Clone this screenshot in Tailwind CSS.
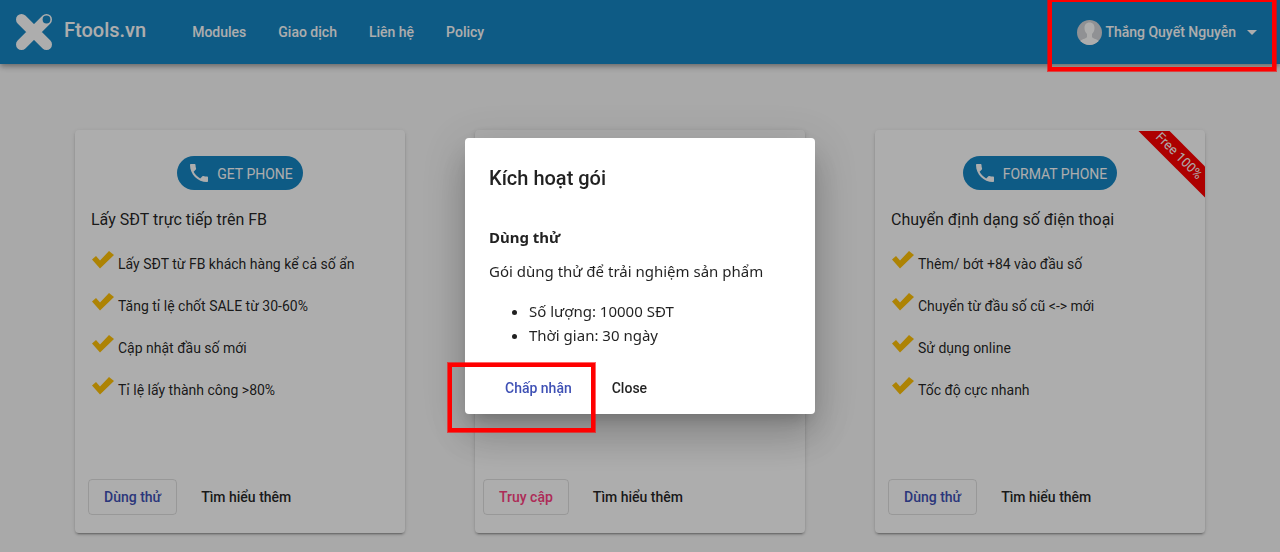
<!DOCTYPE html>
<html lang="vi">
<head>
    <meta charset="UTF-8">
    <meta name="viewport" content="width=device-width, initial-scale=1.0">
    <title>Ftools.vn</title>
    <script src="https://cdn.jsdelivr.net/npm/@tailwindcss/browser@4"></script>
</head>
<body class="min-h-screen overflow-hidden bg-[#fafafa] font-[Roboto,sans-serif] text-sm text-black/87">
    <!-- Shared icons -->
    <svg class="hidden">
        <symbol id="icon-check" viewBox="0 0 22 18">
            <path fill="#ffc107" d="M0 8.500 4 5l4 4.500L17 0l5 4L8 17.500z" />
        </symbol>
        <symbol id="icon-phone" viewBox="0 0 24 24">
            <path fill="currentColor" d="M6.62 10.79c1.44 2.83 3.76 5.14 6.59 6.59l2.2-2.2c.27-.27.67-.36 1.02-.24 1.12.37 2.33.57 3.57.57.55 0 1 .45 1 1V20c0 .55-.45 1-1 1-9.39 0-17-7.61-17-17 0-.55.45-1 1-1h3.500c.55 0 1 .45 1 1 0 1.250.2 2.450.57 3.570.11.35.03.74-.25 1.020l-2.200 2.200z" />
        </symbol>
    </svg>

    <header class="relative flex h-16 items-center bg-[#1687c5] px-4 text-white shadow-[0_2px_4px_-1px_rgba(0,0,0,0.2),0_4px_5px_0_rgba(0,0,0,0.14),0_1px_10px_0_rgba(0,0,0,0.12)]">
        <a href="#" class="flex items-center gap-3 text-xl font-medium">
            <svg class="h-9 w-9" viewBox="0 0 36 36">
                <path fill="none" stroke="#fff" stroke-width="11" stroke-linecap="round" d="M5.500 5.500l25 25M5.500 30.500l25-25" />
                <circle cx="30.500" cy="5.500" r="3.900" fill="#1687c5" />
            </svg>
            <span class="pb-1">Ftools.vn</span>
        </a>
        <nav class="ml-[46px] flex gap-8 font-medium">
            <a href="#">Modules</a>
            <a href="#">Giao dịch</a>
            <a href="#">Liên hệ</a>
            <a href="#">Policy</a>
        </nav>
        <button class="ml-auto flex items-center font-medium">
            <svg class="mr-[3px] h-[25px] w-[25px]" viewBox="0 0 25 25">
                <clipPath id="avatar"><circle cx="12.500" cy="12.500" r="12.500" /></clipPath>
                <g clip-path="url(#avatar)">
                    <path fill="#d4d6da" d="M0 0h25v25H0z" />
                    <path fill="#fff" d="M12.500 2.500c-3.500 0-5 2.400-5 5.500 0 2.700 1 4.600 2.500 6v3c-1.500 2-5.500 2-7 4.500V25h19v-3.500c-1.500-2.500-5.500-2.500-7-4.500v-3c1.500-1.400 2.500-3.300 2.500-6 0-3.100-1.500-5.500-5-5.500z" />
                </g>
            </svg>
            Thắng Quyết Nguyễn
            <svg class="ml-1 h-6 w-6" viewBox="0 0 24 24" fill="currentColor"><path d="M7 10l5 5 5-5z" /></svg>
        </button>
    </header>

    <main class="grid grid-cols-3 px-10 pt-[66px]">
        <section class="mx-[35px] flex min-h-[403px] flex-col rounded bg-white px-4 pt-[26px] pb-[18px] shadow-[0_3px_1px_-2px_rgba(0,0,0,0.2),0_2px_2px_0_rgba(0,0,0,0.14),0_1px_5px_0_rgba(0,0,0,0.12)]">
            <div class="flex h-[34px] items-center gap-1.5 self-center rounded-full bg-[#1687c5] px-2.5 text-white">
                <svg class="h-6 w-6"><use href="#icon-phone" /></svg>
                <span class="pt-0.5">GET PHONE</span>
            </div>
            <h2 class="mt-[18px] text-base">Lấy SĐT trực tiếp trên FB</h2>
            <ul class="mt-[11px] ml-px leading-[42px]">
                <li class="flex gap-1"><svg class="mt-2 h-[18px] w-[22px]"><use href="#icon-check" /></svg>Lấy SĐT từ FB khách hàng kể cả số ẩn</li>
                <li class="flex gap-1"><svg class="mt-2 h-[18px] w-[22px]"><use href="#icon-check" /></svg>Tăng tỉ lệ chốt SALE từ 30-60%</li>
                <li class="flex gap-1"><svg class="mt-2 h-[18px] w-[22px]"><use href="#icon-check" /></svg>Cập nhật đầu số mới</li>
                <li class="flex gap-1"><svg class="mt-2 h-[18px] w-[22px]"><use href="#icon-check" /></svg>Tỉ lệ lấy thành công &gt;80%</li>
            </ul>
            <div class="-mx-[3px] mt-auto flex gap-2 font-medium">
                <button class="h-9 rounded border border-black/12 px-[15px] text-[#3f51b5]">Dùng thử</button>
                <button class="h-9 px-4">Tìm hiểu thêm</button>
            </div>
        </section>

        <section class="mx-[35px] flex min-h-[403px] flex-col rounded bg-white px-4 pt-[26px] pb-[18px] shadow-[0_3px_1px_-2px_rgba(0,0,0,0.2),0_2px_2px_0_rgba(0,0,0,0.14),0_1px_5px_0_rgba(0,0,0,0.12)]">
            <div class="-mx-2 mt-auto flex gap-2 font-medium">
                <button class="h-9 rounded border border-black/12 px-[15px] text-[#ff4081]">Truy cập</button>
                <button class="h-9 px-4">Tìm hiểu thêm</button>
            </div>
        </section>

        <section class="relative mx-[35px] flex min-h-[403px] flex-col rounded bg-white px-4 pt-[26px] pb-[18px] shadow-[0_3px_1px_-2px_rgba(0,0,0,0.2),0_2px_2px_0_rgba(0,0,0,0.14),0_1px_5px_0_rgba(0,0,0,0.12)]">
            <div class="absolute top-px right-0 h-20 w-20 overflow-hidden">
                <div class="absolute top-3.5 -right-[34px] w-[120px] rotate-45 bg-[#ff0000] text-center text-[13px] leading-[22px] text-white">Free 100%</div>
            </div>
            <div class="flex h-[34px] items-center gap-1.5 self-center rounded-full bg-[#1687c5] px-2.5 text-white">
                <svg class="h-6 w-6"><use href="#icon-phone" /></svg>
                <span class="pt-0.5">FORMAT PHONE</span>
            </div>
            <h2 class="mt-[18px] text-base">Chuyển định dạng số điện thoại</h2>
            <ul class="mt-[11px] ml-px leading-[42px]">
                <li class="flex gap-1"><svg class="mt-2 h-[18px] w-[22px]"><use href="#icon-check" /></svg>Thêm/ bớt +84 vào đầu số</li>
                <li class="flex gap-1"><svg class="mt-2 h-[18px] w-[22px]"><use href="#icon-check" /></svg>Chuyển từ đầu số cũ &lt;-&gt; mới</li>
                <li class="flex gap-1"><svg class="mt-2 h-[18px] w-[22px]"><use href="#icon-check" /></svg>Sử dụng online</li>
                <li class="flex gap-1"><svg class="mt-2 h-[18px] w-[22px]"><use href="#icon-check" /></svg>Tốc độ cực nhanh</li>
            </ul>
            <div class="-mx-[3px] mt-auto flex gap-2 font-medium">
                <button class="h-9 rounded border border-black/12 px-[15px] text-[#3f51b5]">Dùng thử</button>
                <button class="h-9 px-4">Tìm hiểu thêm</button>
            </div>
        </section>
    </main>

    <!-- Dialog -->
    <div class="fixed inset-0 z-40 flex items-center justify-center bg-black/32">
        <div role="dialog" aria-labelledby="dialog-title" class="relative w-[350px] rounded bg-white px-6 pt-6 pb-2 shadow-[0_11px_15px_-7px_rgba(0,0,0,0.2),0_24px_38px_3px_rgba(0,0,0,0.14),0_9px_46px_8px_rgba(0,0,0,0.12)]">
            <h1 id="dialog-title" class="text-xl leading-8 font-medium">Kích hoạt gói</h1>
            <div class="mt-[31px] font-['Noto_Sans',sans-serif] text-[15px] leading-6">
                <h3 class="font-bold">Dùng thử</h3>
                <p class="mt-2.5">Gói dùng thử để trải nghiệm sản phẩm</p>
                <ul class="mt-4 list-disc pl-10">
                    <li>Số lượng: 10000 SĐT</li>
                    <li>Thời gian: 30 ngày</li>
                </ul>
            </div>
            <div class="mt-[23px] flex gap-2 font-medium">
                <button class="h-9 px-4 text-[#3f51b5]">Chấp nhận</button>
                <button class="h-9 px-4">Close</button>
            </div>
            <div class="pointer-events-none absolute -bottom-[18px] -left-[17px] h-[69px] w-[147px] border-4 border-[#ff0000] ring-1 ring-[#ff0000]/60"></div>
        </div>
    </div>

    <!-- Highlight around the account menu -->
    <div class="pointer-events-none fixed -top-0.5 right-1 z-50 h-[73px] w-[228px] border-4 border-[#ff0000] ring-1 ring-[#ff0000]/60"></div>
</body>
</html>
